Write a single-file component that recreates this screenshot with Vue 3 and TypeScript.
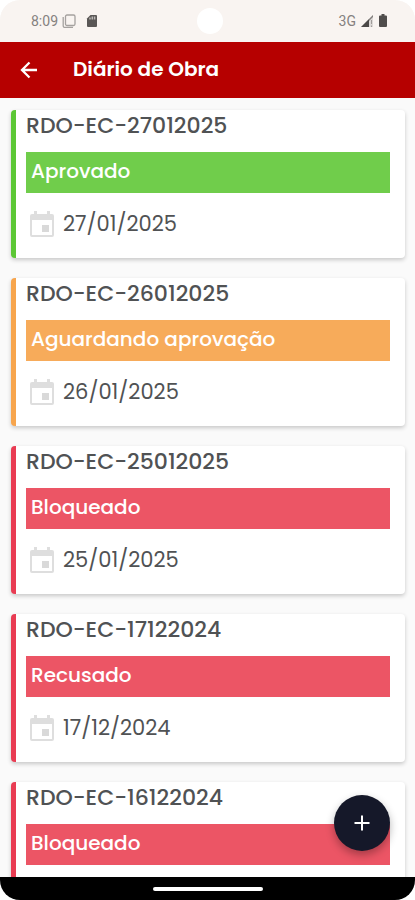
<script setup lang="ts">
type Tone = 'green' | 'orange' | 'red'

interface Report {
  code: string
  status: string
  date: string
  tone: Tone
}

const reports: Report[] = [
  { code: 'RDO-EC-27012025', status: 'Aprovado', date: '27/01/2025', tone: 'green' },
  { code: 'RDO-EC-26012025', status: 'Aguardando aprovação', date: '26/01/2025', tone: 'orange' },
  { code: 'RDO-EC-25012025', status: 'Bloqueado', date: '25/01/2025', tone: 'red' },
  { code: 'RDO-EC-17122024', status: 'Recusado', date: '17/12/2024', tone: 'red' },
  { code: 'RDO-EC-16122024', status: 'Bloqueado', date: '', tone: 'red' },
]
</script>

<template>
  <div class="screen">
    <div class="status-bar">
      <div class="status-group">
        <span>8:09</span>
        <svg width="14" height="14" viewBox="0 0 14 14" fill="none" stroke="#a5a19f">
          <rect x="3.5" y="1" width="9.500" height="10.500" rx="1.500" stroke-width="1.300" />
          <path d="M1.200 3V12a1.300 1.300 0 0 0 1.300 1.300H11" stroke-width="1.300" />
        </svg>
        <svg class="sd-icon" width="12" height="14" viewBox="0 0 12 14">
          <path d="M4.500 1H10a1 1 0 0 1 1 1v10a1 1 0 0 1-1 1H2a1 1 0 0 1-1-1V4.500z" fill="#5a5756" />
          <path d="M4 3.500v2M6.300 2.500v3M8.600 2.500v3" stroke="#bcb8b6" stroke-width="1.500" />
        </svg>
      </div>
      <span class="camera"></span>
      <div class="status-group status-right">
        <span>3G</span>
        <svg width="14" height="14" viewBox="0 0 14 14">
          <path d="M13 1v12H1z" fill="#dedad8" />
          <path d="M9 5v8H1z" fill="#4b4847" />
          <path d="M9 5l4-4v2L9 7z" fill="#827e7c" />
          <path d="M11.500 6v4M11.500 11.500V13" stroke="#a09c9a" />
        </svg>
        <svg width="10" height="14" viewBox="0 0 10 14">
          <path d="M3.500 0h3v1.500H8a1 1 0 0 1 1 1V12a1 1 0 0 1-1 1H2a1 1 0 0 1-1-1V2.500a1 1 0 0 1 1-1h1.500z" fill="#504d4c" />
        </svg>
      </div>
    </div>

    <header class="app-bar">
      <button class="back" type="button" aria-label="Voltar">
        <svg width="18" height="18" viewBox="0 0 18 18" fill="none" stroke="#fff" stroke-width="2.300">
          <path d="M17 9H2.500M9.500 1.500L2 9L9.500 16.500" />
        </svg>
      </button>
      <h1>Diário de Obra</h1>
    </header>

    <div class="content">
      <main class="list">
        <article v-for="report in reports" :key="report.code" class="card" :class="report.tone">
          <h2>{{ report.code }}</h2>
          <p class="badge">{{ report.status }}</p>
          <p v-if="report.date" class="date">
            <svg width="24" height="28" viewBox="0 0 24 28">
              <path
                d="M4 1h3v3h10V1h3v3h2a2 2 0 0 1 2 2v19a2 2 0 0 1-2 2H2a2 2 0 0 1-2-2V6a2 2 0 0 1 2-2h2zM2 10v15h20V10z"
                fill="#dedede"
                fill-rule="evenodd"
              />
              <path d="M12 15h7v7h-7z" fill="#d9d9d9" />
            </svg>
            <time>{{ report.date }}</time>
          </p>
        </article>
      </main>
      <button class="fab" type="button" aria-label="Adicionar">
        <svg width="16" height="16" viewBox="0 0 16 16" stroke="#fff" stroke-width="2">
          <path d="M8 0.500v15M0.500 8h15" />
        </svg>
      </button>
    </div>

    <div class="nav-bar"><span class="handle"></span></div>
  </div>
</template>

<style>
body {
  margin: 0;
  background: #fff;
}
</style>

<style scoped>
.screen {
  display: flex;
  flex-direction: column;
  height: 100vh;
  overflow: hidden;
  border-radius: 20px;
  background: #fafafa;
  font-family: Poppins, Inter, "Open Sans", sans-serif;
}

h1,
h2,
p {
  margin: 0;
}

button {
  display: flex;
  align-items: center;
  justify-content: center;
  padding: 0;
  border: 0;
  cursor: pointer;
}

svg {
  display: block;
  flex: none;
}

.status-bar {
  display: grid;
  grid-template-columns: 1fr auto 1fr;
  align-items: center;
  flex: none;
  height: 42px;
  padding: 0 27px 0 31px;
  background: #f9f4f1;
  color: #85817f;
  font: 14px/20px Roboto, sans-serif;
}

.status-group {
  display: flex;
  align-items: center;
  gap: 4px;
}

.sd-icon {
  margin-left: 6px;
}

.status-right {
  justify-content: flex-end;
}

.camera {
  width: 26px;
  height: 26px;
  border-radius: 50%;
  background: #fff;
}

.app-bar {
  display: flex;
  align-items: center;
  flex: none;
  gap: 35px;
  height: 56px;
  padding: 0 20px;
  background: #b60000;
  color: #fff;
}

.app-bar h1 {
  padding-bottom: 2px;
  font-size: 20px;
  font-weight: 600;
  line-height: 28px;
}

.back {
  background: none;
}

.content {
  position: relative;
  flex: 1;
  min-height: 0;
}

.list {
  display: flex;
  flex-direction: column;
  gap: 20px;
  box-sizing: border-box;
  height: 100%;
  padding: 12px 10px 20px 11px;
  overflow-y: auto;
  scrollbar-width: none;
}

.card {
  flex: none;
  box-sizing: border-box;
  min-height: 148px;
  padding: 0 15px 0 10px;
  border-left: 5px solid;
  border-radius: 4px;
  background: #fff;
  box-shadow: 0 2px 4px rgba(0, 0, 0, 0.2);
}

.card h2 {
  color: #505254;
  font-size: 22px;
  font-weight: 500;
  line-height: 32px;
}

.badge {
  margin-top: 10px;
  padding: 0 5px 3px;
  color: #fff;
  font-size: 20px;
  font-weight: 500;
  line-height: 38px;
}

.green {
  border-color: #5cc735;
}

.green .badge {
  background: #70cd4b;
}

.orange {
  border-color: #f7a54d;
}

.orange .badge {
  background: #f7ab5a;
}

.red {
  border-color: #e93c53;
}

.red .badge {
  background: #ec5565;
}

.date {
  display: flex;
  align-items: center;
  gap: 9px;
  margin-top: 16px;
  padding-left: 4px;
  color: #505254;
  font-size: 21px;
  line-height: 30px;
}

.fab {
  position: absolute;
  right: 25px;
  bottom: 26px;
  width: 56px;
  height: 56px;
  border-radius: 50%;
  background: #151829;
  box-shadow: 0 4px 8px rgba(0, 0, 0, 0.3);
}

.nav-bar {
  display: flex;
  align-items: center;
  justify-content: center;
  flex: none;
  height: 23px;
  background: #000;
}

.handle {
  width: 110px;
  height: 4px;
  border-radius: 2px;
  background: #fff;
}
</style>
